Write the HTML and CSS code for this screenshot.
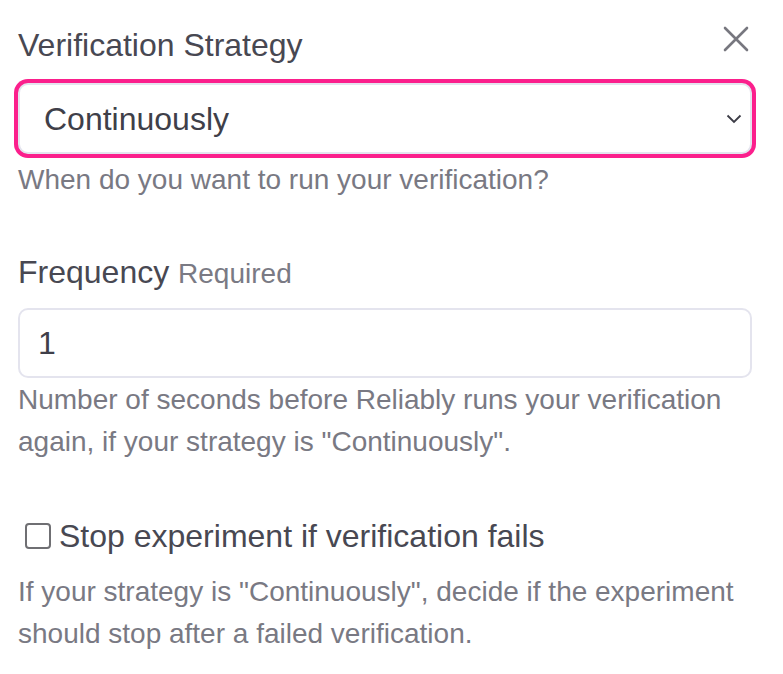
FILE: index.html
```html
<!DOCTYPE html>
<html lang="en">
<head>
<meta charset="utf-8">
<title>Verification</title>
<link rel="stylesheet" href="styles.css">
</head>
<body>
<div class="panel">
  <div class="head-row">
    <label class="label" for="strategy">Verification Strategy</label>
    <button class="close" aria-label="Close">
      <svg width="26" height="26" viewBox="0 0 26 26"><path d="M2 2L24 24M24 2L2 24" stroke="#77777f" stroke-width="2.6" stroke-linecap="round"/></svg>
    </button>
  </div>
  <div class="select-wrap">
    <select id="strategy" class="control select">
      <option>Continuously</option>
    </select>
    <svg class="chevron" width="16" height="10" viewBox="0 0 16 10"><path d="M1.5 1.5L8 8L14.5 1.5" fill="none" stroke="#3c3c46" stroke-width="1.8"/></svg>
  </div>
  <p class="help help-first">When do you want to run your verification?</p>

  <div class="field">
    <label class="label" for="freq">Frequency <span class="req">Required</span></label>
    <input id="freq" class="control input" type="text" value="1">
    <p class="help">Number of seconds before Reliably runs your verification again, if your strategy is "Continuously".</p>
  </div>

  <div class="field">
    <label class="check-row"><input type="checkbox" class="check"><span>Stop experiment if verification fails</span></label>
    <p class="help help-check">If your strategy is "Continuously", decide if the experiment should stop after a failed verification.</p>
  </div>
</div>
</body>
</html>
```
FILE: styles.css
```css
* { box-sizing: border-box; }
html, body { margin: 0; padding: 0; background: #fff; }
body {
  font-family: "Liberation Sans", Arial, sans-serif;
  color: #484852;
}
.panel {
  padding: 21px 31px 0 18px;
  width: 783px;
}
.head-row {
  display: flex;
  justify-content: space-between;
  align-items: flex-start;
}
.label {
  display: block;
  font-size: 32px;
  line-height: 48px;
  color: #484852;
}
.req {
  font-size: 28px;
  line-height: 1;
  color: #7a7a84;
}
.close {
  border: 0;
  background: none;
  padding: 0;
  margin: 5px 3px 0 0;
  width: 26px;
  height: 26px;
  cursor: pointer;
}
.close svg { display: block; }
.select-wrap {
  position: relative;
  margin-top: 14px;
}
.control {
  display: block;
  width: 100%;
  height: 71px;
  border: 2px solid #e4e4ee;
  border-radius: 10px;
  background: #fff;
  font-family: "Liberation Sans", Arial, sans-serif;
  font-size: 32px;
  color: #3f3f49;
  outline: none;
  margin: 0;
}
.select {
  appearance: none;
  -webkit-appearance: none;
  padding: 0 50px 0 24px;
  box-shadow: 0 0 0 4px #fb1f8c;
}
.chevron {
  position: absolute;
  right: 10px;
  top: 31px;
}
.input {
  height: 70px;
  padding: 0 18px;
  margin-top: 12px;
}
.help {
  margin: 1px 0 0;
  font-size: 28px;
  line-height: 42px;
  color: #797983;
}
.help-first { margin-top: 5px; }
.field { margin-top: 47px; }
.field + .field { margin-top: 49px; }
.check-row {
  display: flex;
  align-items: center;
  gap: 8px;
  font-size: 32px;
  line-height: 48px;
  color: #484852;
  padding-left: 7px;
}
.check {
  appearance: none;
  -webkit-appearance: none;
  width: 26px;
  height: 26px;
  margin: 0;
  border: 2px solid #6f6f73;
  border-radius: 4px;
  background: #fff;
  flex: none;
}
.help-check { margin-top: 11px; }
```
